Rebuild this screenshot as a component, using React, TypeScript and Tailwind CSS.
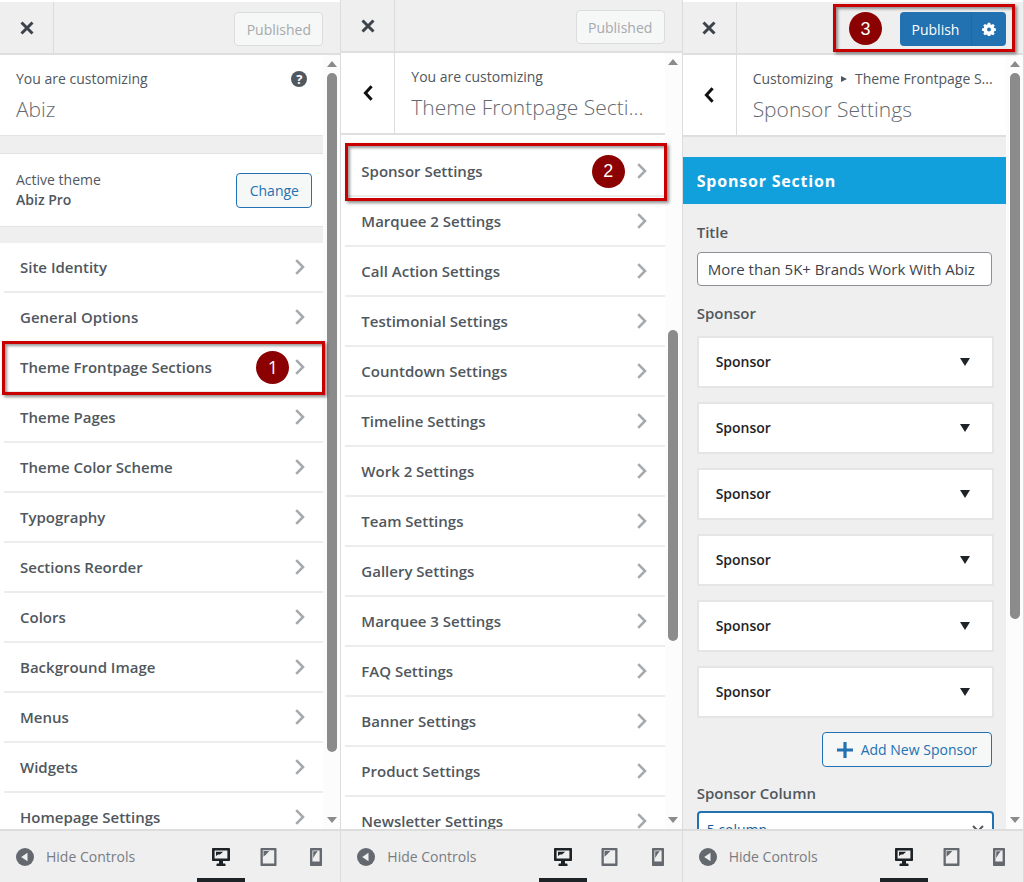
import React from "react";
import clsx from "clsx";

const generalSections = [
  "Site Identity",
  "General Options",
  "Theme Frontpage Sections",
  "Theme Pages",
  "Theme Color Scheme",
  "Typography",
  "Sections Reorder",
  "Colors",
  "Background Image",
  "Menus",
  "Widgets",
  "Homepage Settings",
];

const frontpageSections = [
  "Sponsor Settings",
  "Marquee 2 Settings",
  "Call Action Settings",
  "Testimonial Settings",
  "Countdown Settings",
  "Timeline Settings",
  "Work 2 Settings",
  "Team Settings",
  "Gallery Settings",
  "Marquee 3 Settings",
  "FAQ Settings",
  "Banner Settings",
  "Product Settings",
  "Newsletter Settings",
];

const sponsors = [1, 2, 3, 4, 5, 6];

function CloseIcon() {
  return (
    <svg viewBox="0 0 14 14" className="w-3.5 h-3.5" fill="none" stroke="#3c434a" strokeWidth="3">
      <path d="M1.5 1.5 12.5 12.5M12.5 1.5 1.5 12.5" />
    </svg>
  );
}

function BackIcon() {
  return (
    <svg viewBox="0 0 10 16" className="w-2.5 h-4" fill="none" stroke="#111" strokeWidth="3">
      <path d="M8.6 1.2 2.4 8l6.2 6.8" />
    </svg>
  );
}

function RowArrow() {
  return (
    <svg viewBox="0 0 10 16" className="w-2.5 h-4 shrink-0" fill="none" stroke="#a7aaad" strokeWidth="2.6">
      <path d="M1.2 1.2 8 8l-6.8 6.8" />
    </svg>
  );
}

function DesktopIcon() {
  return (
    <svg viewBox="0 0 20 20" className="w-5 h-5">
      <path
        fill="currentColor"
        fillRule="evenodd"
        d="M1.8 1h16.4c.5 0 .8.3.8.8v11.4c0 .5-.3.8-.8.8H12v2.4h1.4c.6 0 1.1.4 1.1 1V19h-9v-1.6c0-.6.5-1 1.1-1H8V14H1.8c-.5 0-.8-.3-.8-.8V1.800c0-.5.3-.8.8-.8ZM3.600 3.600v7.800h12.800V3.600Z"
      />
      <path fill="currentColor" d="M5 4.800h7.200L9 7.400H7L5 9Z" />
    </svg>
  );
}

function TabletIcon() {
  return (
    <svg viewBox="0 0 20 20" className="w-5 h-5">
      <path
        fill="currentColor"
        fillRule="evenodd"
        d="M2.500 1h14c.6 0 1 .4 1 1v16c0 .6-.4 1-1 1h-14c-.6 0-1-.4-1-1V2c0-.6.4-1 1-1ZM3.800 3.200v13.300h11.400V3.200Z"
      />
      <path fill="currentColor" d="M4.500 4h5.800L7.300 7.200 4.500 9.800Z" />
    </svg>
  );
}

function PhoneIcon() {
  return (
    <svg viewBox="0 0 20 20" className="w-5 h-5">
      <path
        fill="currentColor"
        fillRule="evenodd"
        d="M5 1h10c.6 0 1 .4 1 1v16c0 .6-.4 1-1 1H5c-.6 0-1-.4-1-1V2c0-.6.4-1 1-1ZM6.400 3.400v11h7.200v-11Z"
      />
      <path fill="currentColor" d="M7.200 4.200h4.600L9.600 7 7.200 11Z" />
    </svg>
  );
}

function GearIcon() {
  return (
    <svg viewBox="0 0 20 20" className="w-3.5 h-3.5">
      <path
        fill="#fff"
        fillRule="evenodd"
        d="M8.300 1h3.400l.5 2.500 1.500.6 2.100-1.400 2.400 2.400-1.400 2.100.6 1.500 2.500.5v3.400l-2.500.5-.6 1.500 1.400 2.100-2.400 2.400-2.100-1.400-1.500.6-.5 2.500H8.300l-.5-2.500-1.500-.6-2.100 1.400-2.400-2.400 1.400-2.100-.6-1.500L.1 12.600V9.200l2.500-.5.6-1.500-1.400-2.100 2.400-2.400 2.100 1.400 1.500-.6ZM10 8a2.800 2.800 0 1 0 0 5.600A2.800 2.800 0 0 0 10 8Z"
      />
    </svg>
  );
}

function StepBadge({ step, className }: { step: number; className?: string }) {
  return (
    <span
      className={clsx(
        "flex items-center justify-center w-[33px] h-[33px] shrink-0 rounded-full bg-[#8b0000] text-white text-lg leading-none font-normal",
        className
      )}
    >
      {step}
    </span>
  );
}

function Highlight({ className }: { className: string }) {
  return (
    <span
      className={clsx(
        "absolute z-10 pointer-events-none border-[3px] border-[#c80000] shadow-[2px_2px_3px_rgba(0,0,0,0.45),inset_2px_2px_3px_rgba(0,0,0,0.4)]",
        className
      )}
    />
  );
}

function Scrollbar({ start, size }: { start: number; size: number }) {
  return (
    <div aria-hidden="true" className="flex flex-col items-center w-[17px] shrink-0 py-1.5 bg-[#fcfcfc]">
      <svg viewBox="0 0 10 6" className="w-2.5 h-1.5 shrink-0">
        <path d="M5 0 10 6H0Z" fill="#8b8b8b" />
      </svg>
      <div className="relative flex-1 my-1.5 w-2.5">
        <div
          className="absolute inset-x-0 rounded-full bg-[#8b8b8b]"
          style={{ top: `${start}%`, height: `${size}%` }}
        />
      </div>
      <svg viewBox="0 0 10 6" className="w-2.5 h-1.5 shrink-0">
        <path d="M0 0h10L5 6Z" fill="#8b8b8b" />
      </svg>
    </div>
  );
}

function TopBar({ children }: { children: React.ReactNode }) {
  return (
    <header className="flex items-stretch justify-between h-[53px] shrink-0 border-b-2 border-[#dfdfdf] bg-[#efefef]">
      <button aria-label="Close" className="flex items-center justify-center w-[54px] border-r border-[#dcdcde]">
        <CloseIcon />
      </button>
      <div className="flex items-center pt-0.5">{children}</div>
    </header>
  );
}

function PublishedButton() {
  return (
    <button
      disabled
      className="h-[34px] w-[89px] mr-[17px] pt-0.5 rounded border border-[#dcdcde] bg-[#f6f7f7] text-sm text-[#a7aaad]"
    >
      Published
    </button>
  );
}

function BottomBar() {
  return (
    <footer className="flex items-stretch justify-between h-[53px] shrink-0 border-t-2 border-[#dddddd] bg-[#efefef]">
      <button className="flex items-center gap-3 pl-4 text-sm text-[#787c82]">
        <svg viewBox="0 0 18 18" className="w-[18px] h-[18px]">
          <circle cx="9" cy="9" r="9" fill="#646970" />
          <path d="M11.500 4.800v8.400L5.200 9Z" fill="#efefef" />
        </svg>
        Hide Controls
      </button>
      <div className="flex text-[#646970]">
        <button aria-label="Desktop preview" className="flex items-center justify-center w-12 pt-1 border-b-4 border-[#1d2327] text-[#1d2327]">
          <DesktopIcon />
        </button>
        <button aria-label="Tablet preview" className="flex items-center justify-center w-[47px]">
          <TabletIcon />
        </button>
        <button aria-label="Mobile preview" className="flex items-center justify-center w-12">
          <PhoneIcon />
        </button>
      </div>
    </footer>
  );
}

function PanelHeading({ trail, title }: { trail: React.ReactNode; title: string }) {
  return (
    <div className="flex items-stretch h-[82px] border-b-2 border-[#dfdfdf] bg-white">
      <button aria-label="Back" className="flex items-center justify-center w-[54px] shrink-0 border-r border-[#dcdcde]">
        <BackIcon />
      </button>
      <div className="pt-3.5 pl-4 whitespace-nowrap">
        <p className="flex items-center h-5 text-sm">{trail}</p>
        <h2 className="text-[21px] leading-10 font-light text-[#646970]">{title}</h2>
      </div>
    </div>
  );
}

type SectionListProps = {
  items: string[];
  active: string;
  step: number;
  badgeClass: string;
  highlightClass: string;
};

function SectionList({ items, active, step, badgeClass, highlightClass }: SectionListProps) {
  return (
    <ul className="pl-1">
      {items.map((item) => (
        <li key={item} className="relative border-b-2 border-[#ececec]">
          <button className="flex items-center justify-between w-full h-12 pl-4 pr-[18px] text-left text-[15px] font-semibold text-[#50575e]">
            {item}
            <span className="flex items-center">
              {item === active && <StepBadge step={step} className={badgeClass} />}
              <RowArrow />
            </span>
          </button>
          {item === active && <Highlight className={highlightClass} />}
        </li>
      ))}
    </ul>
  );
}

function GeneralPanel() {
  return (
    <section className="flex flex-col min-w-0 min-h-0 pt-0.5 border-r border-[#dcdcde]">
      <TopBar>
        <PublishedButton />
      </TopBar>
      <div className="flex flex-1 min-h-0 overflow-hidden">
        <div className="flex-1 min-w-0 bg-white">
          <div className="flex justify-between h-20 pt-3.5 px-4">
            <div>
              <p className="text-sm leading-5">You are customizing</p>
              <h2 className="text-[21px] leading-10 font-light text-[#646970]">Abiz</h2>
            </div>
            <button
              aria-label="Help"
              className="flex items-center justify-center w-4 h-4 mt-0.5 rounded-full bg-[#50575e] text-white text-[13px] leading-none font-bold"
            >
              ?
            </button>
          </div>
          <div className="h-[19px] border-y border-[#e4e4e4] bg-[#efefef]" />
          <div className="flex items-center justify-between h-[72px] pl-4 pr-[11px]">
            <p className="text-sm leading-5">
              Active theme
              <strong className="block font-semibold">Abiz Pro</strong>
            </p>
            <button className="h-[35px] w-19 pt-0.5 rounded border border-[#2271b1] bg-[#f6f7f7] text-sm text-[#2271b1]">
              Change
            </button>
          </div>
          <div className="h-[17px] border-t border-[#e4e4e4] bg-[#efefef]" />
          <SectionList
            items={generalSections}
            active="Theme Frontpage Sections"
            step={1}
            badgeClass="mr-1.5"
            highlightClass="-left-0.5 -right-0.5 -top-0.5 -bottom-1"
          />
        </div>
        <Scrollbar start={0} size={92} />
      </div>
      <BottomBar />
    </section>
  );
}

function FrontpagePanel() {
  return (
    <section className="flex flex-col min-w-0 min-h-0 border-r border-[#dcdcde]">
      <TopBar>
        <PublishedButton />
      </TopBar>
      <div className="flex flex-1 min-h-0 overflow-hidden">
        <div className="flex-1 min-w-0 bg-white">
          <PanelHeading trail="You are customizing" title="Theme Frontpage Secti..." />
          <div className="pt-3">
            <SectionList
              items={frontpageSections}
              active="Sponsor Settings"
              step={2}
              badgeClass="mr-3 font-['Liberation_Sans',sans-serif]"
              highlightClass="left-0 -right-0.5 -top-1 -bottom-1.5"
            />
          </div>
        </div>
        <Scrollbar start={35} size={42} />
      </div>
      <BottomBar />
    </section>
  );
}

function SponsorPanel() {
  return (
    <section className="flex flex-col min-w-0 min-h-0 pt-0.5 border-r border-[#dcdcde]">
      <TopBar>
        <div className="relative flex items-center pr-[17px]">
          <StepBadge step={3} className="mr-[18px] font-['Liberation_Sans',sans-serif]" />
          <button className="h-[34px] w-[71px] pt-0.5 rounded-l bg-[#2271b1] text-sm text-white">Publish</button>
          <button
            aria-label="Publish settings"
            className="flex items-center justify-center h-[34px] w-[35px] rounded-r border-l border-[#1d68a6] bg-[#2271b1]"
          >
            <GearIcon />
          </button>
          <Highlight className="-left-4 right-2 -top-2 -bottom-1.5" />
        </div>
      </TopBar>
      <div className="flex flex-1 min-h-0 overflow-hidden">
        <div className="flex-1 min-w-0 bg-[#efefef]">
          <PanelHeading
            trail={
              <>
                Customizing
                <svg viewBox="0 0 6 6" className="w-1.5 h-1.5 mx-2">
                  <path d="M0 0 6 3 0 6Z" fill="#50575e" />
                </svg>
                Theme Frontpage S...
              </>
            }
            title="Sponsor Settings"
          />
          <h3 className="flex items-center h-[47px] mt-5 pl-3.5 bg-[#12a0dc] text-base font-bold tracking-wider text-white">
            Sponsor Section
          </h3>
          <div className="flex flex-col pl-3.5 pr-3">
            <label htmlFor="sponsor-title" className="mt-[18px] text-[15px] leading-5 font-semibold">
              Title
            </label>
            <input
              id="sponsor-title"
              defaultValue="More than 5K+ Brands Work With Abiz"
              className="h-[34px] mt-2.5 mr-0.5 px-2.5 rounded border border-[#8c8f94] bg-white text-[15px] text-[#3c434a]"
            />
            <p className="mt-[17px] text-[15px] leading-5 font-semibold">Sponsor</p>
            <div className="flex flex-col gap-3.5 mt-[13px]">
              {sponsors.map((id) => (
                <button
                  key={id}
                  className="flex items-center justify-between h-[52px] pl-[17px] pr-[22px] border-2 border-[#e5e5e5] bg-white text-sm font-semibold text-[#1d2327]"
                >
                  Sponsor
                  <svg viewBox="0 0 10 8" className="w-2.5 h-2">
                    <path d="M0 0h10L5 8Z" fill="#1d2327" />
                  </svg>
                </button>
              ))}
            </div>
            <button className="flex items-center justify-center gap-2 self-end h-[35px] w-[170px] mt-3.5 mr-0.5 rounded border border-[#2271b1] bg-[#f6f7f7] text-sm text-[#2271b1]">
              <svg viewBox="0 0 16 16" className="w-4 h-4" stroke="#2271b1" strokeWidth="3.200">
                <path d="M8 0v16M0 8h16" />
              </svg>
              Add New Sponsor
            </button>
            <label htmlFor="sponsor-column" className="mt-4 text-[15px] leading-5 font-semibold">
              Sponsor Column
            </label>
            <div className="relative mt-2">
              <select
                id="sponsor-column"
                className="w-full h-[38px] px-2 appearance-none rounded border-2 border-[#2271b1] bg-white text-sm text-[#135e96]"
              >
                <option>5 column</option>
              </select>
              <svg
                viewBox="0 0 12 8"
                className="absolute right-2.5 top-3.5 w-3 h-2 pointer-events-none"
                fill="none"
                stroke="#50575e"
                strokeWidth="2"
              >
                <path d="m1 1 5 5 5-5" />
              </svg>
            </div>
          </div>
        </div>
        <Scrollbar start={0} size={74} />
      </div>
      <BottomBar />
    </section>
  );
}

export default function App() {
  return (
    <main className="grid grid-cols-3 grid-rows-1 h-screen overflow-hidden bg-white font-['Open_Sans','Noto_Sans',sans-serif] text-[#50575e]">
      <GeneralPanel />
      <FrontpagePanel />
      <SponsorPanel />
    </main>
  );
}
